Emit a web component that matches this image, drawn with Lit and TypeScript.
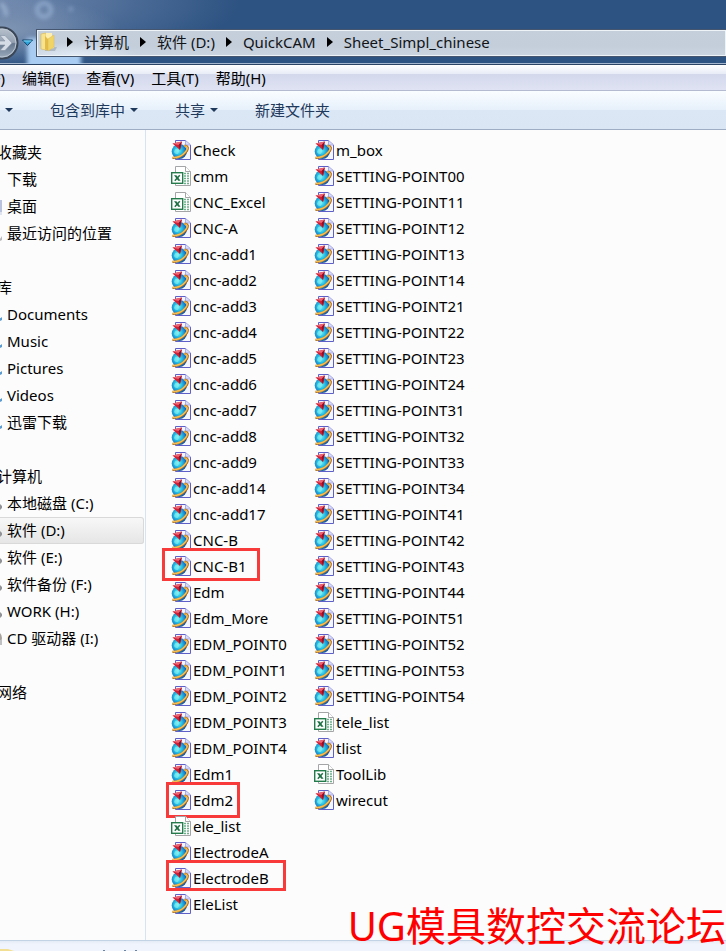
import { LitElement, html, svg, css, nothing } from "lit";
import { customElement, property } from "lit/decorators.js";
import { classMap } from "lit/directives/class-map.js";

type FileKind = "part" | "sheet";

interface Entry {
  name: string;
  kind: FileKind;
  mark?: string;
}

const part = (name: string, mark?: string): Entry => ({ name, kind: "part", mark });
const sheet = (name: string): Entry => ({ name, kind: "sheet" });

const points = [
  "00", "11", "12", "13", "14", "21", "22", "23", "24", "31", "32",
  "33", "34", "41", "42", "43", "44", "51", "52", "53", "54",
];

const FILES: Entry[] = [
  part("Check"),
  sheet("cmm"),
  sheet("CNC_Excel"),
  part("CNC-A"),
  ...[1, 2, 3, 4, 5, 6, 7, 8, 9, 14, 17].map((n) => part(`cnc-add${n}`)),
  part("CNC-B"),
  part("CNC-B1", "mark-wide"),
  part("Edm"),
  part("Edm_More"),
  ...[0, 1, 2, 3, 4].map((n) => part(`EDM_POINT${n}`)),
  part("Edm1"),
  part("Edm2", "mark-tall"),
  sheet("ele_list"),
  part("ElectrodeA"),
  part("ElectrodeB", "mark-long"),
  part("EleList"),
  part("m_box"),
  ...points.map((p) => part(`SETTING-POINT${p}`)),
  sheet("tele_list"),
  part("tlist"),
  sheet("ToolLib"),
  part("wirecut"),
];

interface Group {
  title: string;
  icon: string;
  items: { name: string; icon: string; current?: boolean }[];
}

const GROUPS: Group[] = [
  {
    title: "收藏夹",
    icon: "none",
    items: [
      { name: "下载", icon: "none" },
      { name: "桌面", icon: "desktop" },
      { name: "最近访问的位置", icon: "recent" },
    ],
  },
  {
    title: "库",
    icon: "none",
    items: ["Documents", "Music", "Pictures", "Videos", "迅雷下载"].map((name) => ({
      name,
      icon: "library",
    })),
  },
  {
    title: "计算机",
    icon: "none",
    items: [
      { name: "本地磁盘 (C:)", icon: "disk" },
      { name: "软件 (D:)", icon: "disk", current: true },
      { name: "软件 (E:)", icon: "disk" },
      { name: "软件备份 (F:)", icon: "disk" },
      { name: "WORK (H:)", icon: "disk" },
      { name: "CD 驱动器 (I:)", icon: "disc" },
    ],
  },
  { title: "网络", icon: "none", items: [] },
];

const partIcon = html`<svg class="icon" viewBox="0 0 20 20" aria-hidden="true">
  <defs>
    <radialGradient id="globe" cx="0.42" cy="0.45" r="0.6">
      <stop offset="0" stop-color="#7cf0f4" />
      <stop offset="0.4" stop-color="#28c4e4" />
      <stop offset="0.75" stop-color="#1680cc" />
      <stop offset="1" stop-color="#0c3c88" />
    </radialGradient>
  </defs>
  <path d="M4.500 .5H14.500L19.500 5V19.500H4.500Z" fill="#f4f6ff" stroke="#5f5fc8" />
  <path d="M14.500 .5V5H19.500" fill="#d9dcf8" stroke="#9a9ae0" stroke-width=".8" />
  <circle cx="8.300" cy="11.500" r="7.600" fill="url(#globe)" />
  <path d="M3 12Q4 7.500 7 9Q9 12 6.500 14Q4 14.500 3 12Z" fill="#8df2f2" opacity=".6" />
  <path d="M1.500 17.800Q8 18.200 12.500 14.500Q17 10.800 16.800 7.800Q16.300 5.400 13 5.800" fill="none" stroke="#a9691c" stroke-width="2.200" />
  <path d="M1.500 17.400Q8 17.800 12.200 14.100Q16.500 10.400 16.300 7.800Q15.800 5.800 13 5.900" fill="none" stroke="#f8bf50" stroke-width="1.400" />
  <path d="M1.500 3.500L10.800 1.500L9 10Z" fill="#d31e34" />
  <path d="M1.500 3.500L10.800 1.500L7.600 5Z" fill="#ec6674" />
  <path d="M10.800 1.500L9 10L7.600 5Z" fill="#951024" />
</svg>`;

const sheetIcon = html`<svg class="icon" viewBox="0 0 20 20" aria-hidden="true">
  <path d="M4.500 .5H14.500L19.500 5.500V19.500H4.500Z" fill="#fff" stroke="#a3a5a7" />
  <path d="M14.500 .5V5.500H19.500" fill="#fff" stroke="#a3a5a7" />
  <path d="M13 7.500H15M16 7.500H18M13 10H15M16 10H18M13 12.500H15M16 12.500H18M13 15H15M16 15H18M13 17.500H15M16 17.500H18" stroke="#6fb08c" stroke-width="1.400" />
  <rect x=".7" y="6.700" width="11" height="10.600" fill="#fff" stroke="#237a4b" stroke-width="1.400" />
  <path d="M3 9.300H5.400L9.600 14.800H7.200Z" fill="#1e7145" />
  <path d="M8.800 9.300L3.800 14.800" stroke="#1e7145" stroke-width="1.500" />
</svg>`;

const navShapes: Record<string, unknown> = {
  none: nothing,
  desktop: svg`<path d="M0 1H16V16H0Z" fill="#b9c3de"/><path d="M0 13H16V16H0Z" fill="#dfe4f0"/>`,
  recent: svg`<path d="M6 15Q12 17 16 10V14L12 16Z" fill="#b9b9bd"/>`,
  library: svg`<path d="M8 10Q13 13 16 10V13Q13 15 8 14Z" fill="#5b9bd0"/>`,
  disk: svg`<path d="M2 8H14L16 10V12L14 14H2Z" fill="#909296"/>`,
  disc: svg`<circle cx="9" cy="7" r="7" fill="#a9a29c"/><path d="M10 9H16V14H10Z" fill="#bfc0c2"/>`,
};

const caret = html`<svg class="caret" viewBox="0 0 8 4" aria-hidden="true"><path d="M0 0H8L4 4Z" /></svg>`;
const chevron = html`<svg class="chevron" viewBox="0 0 6 10" aria-hidden="true"><path d="M0 0L6 5L0 10Z" /></svg>`;

@customElement("file-entry")
export class FileEntry extends LitElement {
  @property({ attribute: false }) entry!: Entry;

  static styles = css`
    :host {
      display: block;
    }
    .file {
      position: relative;
      display: inline-flex;
      align-items: center;
      gap: 2px;
      height: 26px;
      color: #000;
      text-decoration: none;
      white-space: nowrap;
    }
    .icon {
      flex: none;
      width: 20px;
      height: 20px;
    }
    .mark {
      position: absolute;
      box-sizing: border-box;
      border: 3px solid #f93a3a;
      top: -5px;
      left: -5px;
    }
    .mark-wide {
      left: -9px;
      width: 98px;
      height: 33px;
    }
    .mark-tall {
      width: 74px;
      height: 36px;
    }
    .mark-long {
      width: 120px;
      height: 31px;
    }
  `;

  render() {
    const { name, kind, mark } = this.entry;
    return html`<a class="file" href="#">
      ${kind === "part" ? partIcon : sheetIcon}<span>${name}</span>
      ${mark ? html`<span class=${classMap({ mark: true, [mark]: true })}></span>` : nothing}
    </a>`;
  }
}

@customElement("app-root")
export class AppRoot extends LitElement {
  static styles = css`
    :host {
      position: relative;
      display: flex;
      flex-direction: column;
      min-height: 100vh;
      box-sizing: border-box;
      overflow: hidden;
      background: #fcfcfc;
      color: #000;
      font: 15px/26px "Noto Sans", "Noto Sans CJK SC", sans-serif;
    }
    button {
      display: flex;
      align-items: center;
      gap: 5px;
      margin: 0;
      padding: 0;
      border: 0;
      background: none;
      color: inherit;
      font: inherit;
      white-space: nowrap;
    }
    .glass {
      position: relative;
      display: flex;
      flex-direction: column;
      height: 65px;
      box-sizing: border-box;
      padding-top: 29px;
      overflow: hidden;
      border-bottom: 1px solid #2b4364;
      box-shadow: inset 0 -1px 0 #a3b6cd;
      background:
        radial-gradient(ellipse 120px 34px at 0 30px, #8297b5 0, #8297b500 100%),
        radial-gradient(ellipse 240px 70px at 0 0, #7088ae 0, #7088ae00 100%),
        #2d5382;
    }
    .haze {
      position: absolute;
      left: 0;
      top: 0;
      width: 320px;
      height: 80px;
      filter: blur(2px);
    }
    .address-row {
      position: relative;
      display: flex;
      align-items: center;
      height: 28px;
    }
    .forward {
      flex: none;
      width: 19px;
      height: 34px;
    }
    .forward svg {
      width: 19px;
      height: 34px;
    }
    .history {
      flex: none;
      width: 17px;
      justify-content: center;
    }
    .history svg {
      width: 11px;
      height: 8px;
    }
    .address {
      flex: 1;
      display: flex;
      align-items: center;
      height: 28px;
      box-sizing: border-box;
      border: 1px solid #45566e;
      border-right: 0;
      box-shadow: inset 0 0 0 1px #eef3f8;
      background:
        radial-gradient(ellipse 60px 14px at 40px 26px, #e2ebf6 0, #e2ebf600 100%),
        linear-gradient(#c5cfdb, #c3ceda 60%, #cbd5e1);
      padding: 0 0 2px 3px;
    }
    .folder {
      flex: none;
      width: 18px;
      height: 20px;
    }
    .crumbs {
      display: flex;
      align-items: center;
      gap: 11px;
      margin-left: 9px;
      color: #111418;
    }
    .crumbs button {
      gap: 11px;
    }
    .chevron {
      flex: none;
      width: 6px;
      height: 10px;
      fill: #000;
    }
    .menu {
      display: flex;
      align-items: center;
      gap: 17px;
      height: 26px;
      box-sizing: border-box;
      padding-right: 16px;
      border-bottom: 1px solid #b4bad0;
      background: linear-gradient(#fff, #e7ecf6 36%, #d3d8eb 36%, #dfe3f3);
    }
    .menu button:first-child {
      width: 5px;
      justify-content: flex-end;
    }
    .tools {
      display: flex;
      align-items: center;
      gap: 37px;
      height: 39px;
      box-sizing: border-box;
      border-bottom: 1px solid #9fadc4;
      background: linear-gradient(#fafdff, #e6f0fb 50%, #dce7f5 50%, #dbe6f4);
      color: #1e395b;
    }
    .tools button:first-child {
      width: 13px;
      justify-content: flex-end;
    }
    .caret {
      flex: none;
      width: 8px;
      height: 4px;
      fill: #1e395b;
    }
    .body {
      display: flex;
    }
    .sidebar {
      flex: none;
      width: 146px;
      box-sizing: border-box;
      padding-top: 9px;
      overflow: hidden;
      border-right: 1px solid #d6e3f2;
      line-height: 27px;
      white-space: nowrap;
    }
    .group {
      margin: 0 1px 27px -24px;
    }
    .heading,
    .place {
      display: flex;
      align-items: center;
      height: 27px;
      box-sizing: border-box;
      color: #000;
      text-decoration: none;
    }
    .heading {
      padding-left: 21px;
    }
    .place {
      gap: 5px;
      padding-left: 10px;
    }
    .current {
      border-radius: 3px;
      box-shadow: inset 0 0 0 1px #d9d9d9;
      background: linear-gradient(#f8f8f8, #e5e5e5);
    }
    .place-icon {
      flex: none;
      width: 16px;
      height: 16px;
    }
    .files {
      flex: 1;
      display: grid;
      grid-auto-flow: column;
      grid-template-rows: repeat(30, 26px);
      grid-auto-columns: 143px;
      margin: 0;
      padding: 7px 0 23px 25px;
      list-style: none;
    }
    .details {
      flex: 1;
      min-height: 11px;
      box-sizing: border-box;
      border-top: 1px solid #c3d3e6;
      background: linear-gradient(#e4ebf5, #f0f4fc 3px);
      display: flex;
      align-items: flex-end;
    }
    .details svg {
      width: 140px;
      height: 2px;
    }
    .watermark {
      position: absolute;
      right: 0;
      bottom: 0;
      color: #f00;
      font-size: 40px;
      line-height: 50px;
      white-space: nowrap;
    }
  `;

  private header() {
    return html`<header class="glass">
      <svg class="haze" viewBox="0 0 320 80" aria-hidden="true">
        <path d="M0 4Q6 6 6 16" fill="none" stroke="#9ab0cf" stroke-width="4" />
        <circle cx="44" cy="10" r="7" fill="none" stroke="#8fa9cc" stroke-width="4" />
        <circle cx="71" cy="9" r="2" fill="#8fa9cc" />
        <rect x="27" y="38" width="54" height="42" fill="#a9cdf2" />
      </svg>
      <div class="address-row">
        <button class="forward" aria-label="前进">
          <svg viewBox="0 0 19 34" aria-hidden="true">
            <defs>
              <linearGradient id="ball" x1="0" y1="0" x2="0" y2="1">
                <stop offset="0" stop-color="#b9c2ce" />
                <stop offset=".48" stop-color="#95a2b3" />
                <stop offset=".52" stop-color="#66788f" />
                <stop offset="1" stop-color="#9eadbf" />
              </linearGradient>
            </defs>
            <circle cx="2" cy="17" r="15.500" fill="url(#ball)" stroke="#3b4656" stroke-width="2" />
            <circle cx="2" cy="17" r="14" fill="none" stroke="#bdc7d3" />
            <path d="M-2 15H5L0 9.500H5L12 17L5 24.500H0L5 19H-2Z" fill="#d5dce6" stroke="#8390a2" stroke-width=".6" />
          </svg>
        </button>
        <button class="history" aria-label="最近的页面">
          <svg viewBox="0 0 11 8" aria-hidden="true">
            <path d="M.5 1H10.500L5.500 6.500Z" fill="#2ba5dc" stroke="#123f66" />
            <path d="M1.500 2H9.500" stroke="#7fd8f4" />
          </svg>
        </button>
        <nav class="address" aria-label="地址">
          <svg class="folder" viewBox="0 0 18 20" aria-hidden="true">
            <path d="M5 16L17 15L15 19L5 19Z" fill="#8d98a6" opacity=".5" />
            <path d="M1 2L6 1V18L1 17Z" fill="#f7e38e" stroke="#d9b850" stroke-width=".6" />
            <path d="M6 1H12V4H14V16L6 18Z" fill="#fbeeb0" />
            <path d="M5 4L8 7V19L5 17Z" fill="#e3bb47" />
            <path d="M8 7L14 3V15L8 19Z" fill="#f1d468" stroke="#ddb84c" stroke-width=".5" />
          </svg>
          <div class="crumbs">
            ${chevron}
            <button>计算机${chevron}</button>
            <button>软件 (D:)${chevron}</button>
            <button>QuickCAM${chevron}</button>
            <button>Sheet_Simpl_chinese</button>
          </div>
        </nav>
      </div>
    </header>`;
  }

  render() {
    return html`
      ${this.header()}
      <nav class="menu" aria-label="菜单">
        ${["文件(F)", "编辑(E)", "查看(V)", "工具(T)", "帮助(H)"].map((m) => html`<button>${m}</button>`)}
      </nav>
      <div class="tools">
        <button aria-label="组织">${caret}</button>
        <button>包含到库中${caret}</button>
        <button>共享${caret}</button>
        <button>新建文件夹</button>
      </div>
      <main class="body">
        <nav class="sidebar" aria-label="位置">
          ${GROUPS.map(
            (g) => html`<div class="group">
              <a class="heading" href="#">${g.title}</a>
              ${g.items.map(
                (p) => html`<a class=${classMap({ place: true, current: !!p.current })} href="#">
                  <svg class="place-icon" viewBox="0 0 16 16" aria-hidden="true">${navShapes[p.icon]}</svg>
                  <span>${p.name}</span>
                </a>`,
              )}
            </div>`,
          )}
        </nav>
        <ul class="files">
          ${FILES.map((f) => html`<li><file-entry .entry=${f}></file-entry></li>`)}
        </ul>
      </main>
      <footer class="details">
        <svg viewBox="0 0 140 2" aria-hidden="true">
          <path d="M0 0H8L14 2H0Z" fill="#f3df94" />
          <path d="M103 1h2v1h-2zM124 1h2v1h-2zM135 1h2v1h-2z" fill="#6c84a4" />
        </svg>
      </footer>
      <div class="watermark">UG模具数控交流论坛</div>
    `;
  }
}
